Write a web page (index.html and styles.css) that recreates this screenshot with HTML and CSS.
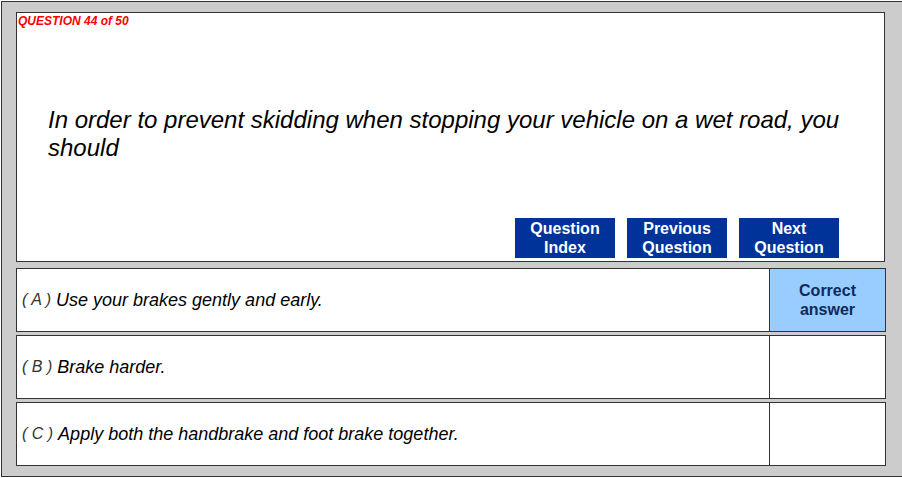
FILE: index.html
```html
<!DOCTYPE html>
<html lang="en">
<head>
  <meta charset="UTF-8">
  <title>Driving Theory Test</title>
  <link rel="stylesheet" href="styles.css">
</head>
<body>

<div class="frame">
  <div class="question-box">
    <div class="counter">QUESTION 44 of 50</div>
    <p class="question">In order to prevent skidding when stopping your vehicle on a wet road, you should</p>
    <div class="nav">
      <button class="nav-btn">Question<br>Index</button>
      <button class="nav-btn">Previous<br>Question</button>
      <button class="nav-btn">Next<br>Question</button>
    </div>
  </div>

  <div class="answer">
    <div class="answer-text"><span class="letter">( A )</span>&nbsp;Use your brakes gently and early.</div>
    <div class="answer-mark correct">Correct<br>answer</div>
  </div>

  <div class="answer">
    <div class="answer-text"><span class="letter">( B )</span>&nbsp;Brake harder.</div>
    <div class="answer-mark"></div>
  </div>

  <div class="answer">
    <div class="answer-text"><span class="letter">( C )</span>&nbsp;Apply both the handbrake and foot brake together.</div>
    <div class="answer-mark"></div>
  </div>
</div>

</body>
</html>
```

FILE: styles.css
```css
body {
  margin: 0;
  padding: 1px 0 0 1px;
  font-family: "Liberation Sans", Arial, sans-serif;
  background-color: #fff;
  overflow: hidden;
}

.frame {
  background-color: #cccccc;
  border: 1px solid #333;
  border-right: none;
  padding: 10px 0 0 14px;
  box-sizing: border-box;
  height: 476px;
}

.question-box {
  background-color: #fff;
  border: 1px solid #333;
  width: 869px;
  height: 250px;
  box-sizing: border-box;
  display: flex;
  flex-direction: column;
}

.counter {
  color: #ff0000;
  font-size: 12px;
  font-weight: bold;
  font-style: italic;
  padding: 1px 0 0 1px;
}

.question {
  font-size: 24px;
  font-style: italic;
  line-height: 28px;
  color: #000;
  margin: 78px 40px 0 31px;
}

.nav {
  margin-top: auto;
  display: flex;
  justify-content: flex-end;
  gap: 12px;
  padding: 0 45px 3px 0;
}

.nav-btn {
  width: 100px;
  height: 40px;
  background-color: #003399;
  color: #fff;
  border: none;
  padding: 0;
  font-family: "Liberation Sans", Arial, sans-serif;
  font-size: 16px;
  font-weight: bold;
  line-height: 19px;
}

.answer {
  display: flex;
  width: 870px;
  height: 64px;
  box-sizing: border-box;
  border: 1px solid #333;
  background-color: #fff;
  margin-top: 3px;
}

.question-box + .answer {
  margin-top: 6px;
}

.answer-text {
  flex: 1;
  display: flex;
  align-items: center;
  padding-left: 5px;
  font-size: 18px;
  font-style: italic;
  color: #000;
}

.letter {
  font-size: 16px;
  color: #333;
}

.answer-mark {
  width: 115px;
  border-left: 1px solid #333;
  display: flex;
  align-items: center;
  justify-content: center;
  text-align: center;
  font-size: 16px;
  font-weight: bold;
  line-height: 19px;
  color: #0d2a5c;
}

.correct {
  background-color: #99ccff;
}
```
